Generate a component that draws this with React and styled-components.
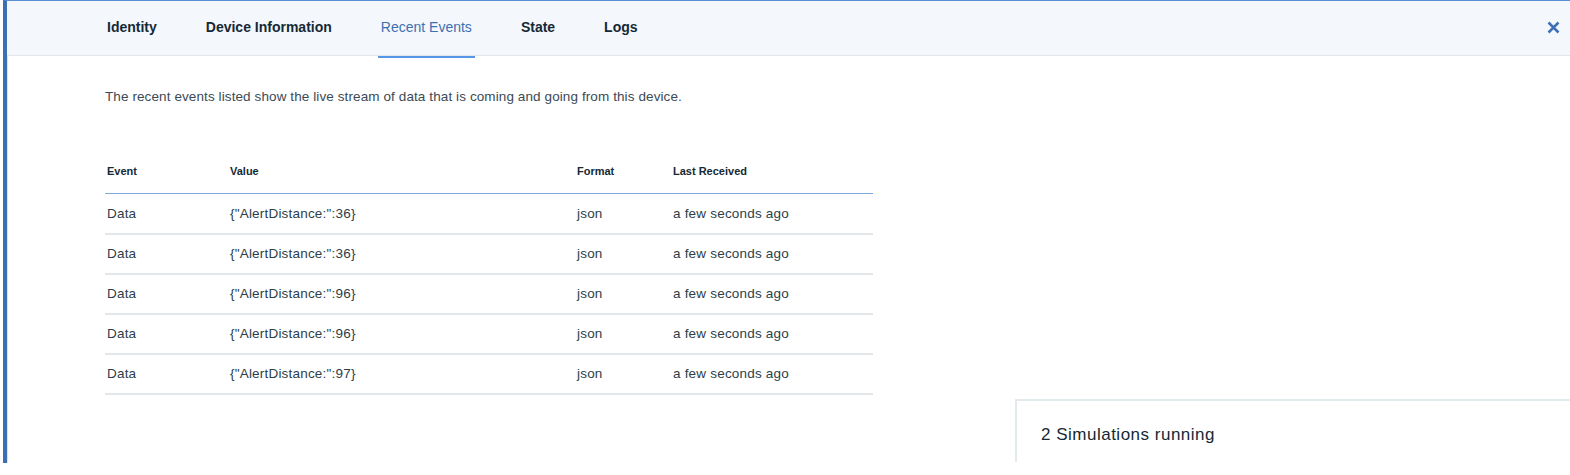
import { createGlobalStyle } from "styled-components";
import styled from "styled-components";

const GlobalStyle = createGlobalStyle`
  html, body {
    margin: 0;
    padding: 0;
    background: #ffffff;
  }
  body {
    font-family: "Liberation Sans", Arial, sans-serif;
    color: #152935;
    overflow: hidden;
  }
`;

const events = [
  { event: "Data", value: '{"AlertDistance:":36}', format: "json", received: "a few seconds ago" },
  { event: "Data", value: '{"AlertDistance:":36}', format: "json", received: "a few seconds ago" },
  { event: "Data", value: '{"AlertDistance:":96}', format: "json", received: "a few seconds ago" },
  { event: "Data", value: '{"AlertDistance:":96}', format: "json", received: "a few seconds ago" },
  { event: "Data", value: '{"AlertDistance:":97}', format: "json", received: "a few seconds ago" },
];

const tabs = ["Identity", "Device Information", "Recent Events", "State", "Logs"];

export default function App() {
  return (
    <Screen>
      <GlobalStyle />
      <Panel>
        <Header>
          <Tabs>
            {tabs.map((t) => (
              <Tab key={t} $active={t === "Recent Events"}>{t}</Tab>
            ))}
          </Tabs>
          <Close aria-label="close">
            <svg width="13" height="13" viewBox="0 0 13 13">
              <path d="M1.5 1.5 L11.5 11.5 M11.5 1.5 L1.5 11.5" stroke="#3d70b2" strokeWidth="2.5" strokeLinecap="butt" />
            </svg>
          </Close>
        </Header>
        <Content>
          <Intro>The recent events listed show the live stream of data that is coming and going from this device.</Intro>
          <Table>
            <thead>
              <tr>
                <Th $w={121}>Event</Th>
                <Th $w={345}>Value</Th>
                <Th $w={94}>Format</Th>
                <Th>Last Received</Th>
              </tr>
            </thead>
            <tbody>
              {events.map((e, i) => (
                <Row key={i}>
                  <Td>{e.event}</Td>
                  <Td>{e.value}</Td>
                  <Td>{e.format}</Td>
                  <Td>{e.received}</Td>
                </Row>
              ))}
            </tbody>
          </Table>
        </Content>
      </Panel>
      <SimBox>2 Simulations running</SimBox>
    </Screen>
  );
}

const Screen = styled.div`
  position: relative;
  width: 1570px;
  height: 475px;
  background: #ffffff;
  padding-left: 3px;
  box-sizing: border-box;
`;

const Panel = styled.div`
  height: 463px;
  box-sizing: border-box;
  border-left: 4px solid #3d70b2;
  border-top: 1px solid #5a8fd6;
  box-shadow: inset 1px 0 0 #dfe3e6;
  display: flex;
  flex-direction: column;
`;

const Header = styled.div`
  height: 54px;
  background: #f4f7fb;
  border-bottom: 1px solid #e3e7ea;
  display: flex;
  align-items: stretch;
  justify-content: space-between;
  padding-left: 97px;
  padding-right: 4px;
`;

const Tabs = styled.div`
  display: flex;
  gap: 43px;
`;

const Tab = styled.div`
  display: flex;
  align-items: center;
  padding: 0 3px 3px;
  font-size: 14px;
  font-weight: ${(p) => (p.$active ? 400 : 700)};
  color: ${(p) => (p.$active ? "#3d70b2" : "#152935")};
  box-shadow: ${(p) => (p.$active ? "0 2px 0 #5596e6" : "none")};
  margin-bottom: ${(p) => (p.$active ? "-1px" : "0")};
`;

const Close = styled.div`
  display: flex;
  align-items: center;
  padding: 0 6px 0 0;
  margin-top: -2px;
`;

const Content = styled.div`
  padding-left: 98px;
  padding-top: 33px;
`;

const Intro = styled.p`
  margin: 0;
  font-size: 13.5px;
  letter-spacing: 0.1px;
  color: #3b4a55;
  line-height: 16px;
`;

const Table = styled.table`
  margin-top: 44px;
  width: 768px;
  border-collapse: collapse;
  font-size: 13.5px;
`;

const Th = styled.th`
  text-align: left;
  font-size: 11px;
  font-weight: 700;
  color: #152935;
  padding: 0 0 0 2px;
  height: 44px;
  vertical-align: middle;
  width: ${(p) => (p.$w ? `${p.$w}px` : "auto")};
  border-bottom: 1px solid #7ea7dc;
`;

const Row = styled.tr`
  height: 40px;
  border-bottom: 2px solid #e3e7ea;
`;

const Td = styled.td`
  padding: 0 0 0 2px;
  color: #2c3e4a;
  vertical-align: middle;
  letter-spacing: 0.2px;
`;

const SimBox = styled.div`
  position: absolute;
  left: 1015px;
  top: 399px;
  right: -10px;
  height: 63px;
  box-sizing: border-box;
  border-left: 2px solid #e3eaee;
  border-top: 2px solid #e3eaee;
  background: #ffffff;
  padding: 24px 0 0 24px;
  font-size: 17px;
  letter-spacing: 0.5px;
  color: #152935;
  font-family: "Liberation Sans", Arial, sans-serif;
`;
